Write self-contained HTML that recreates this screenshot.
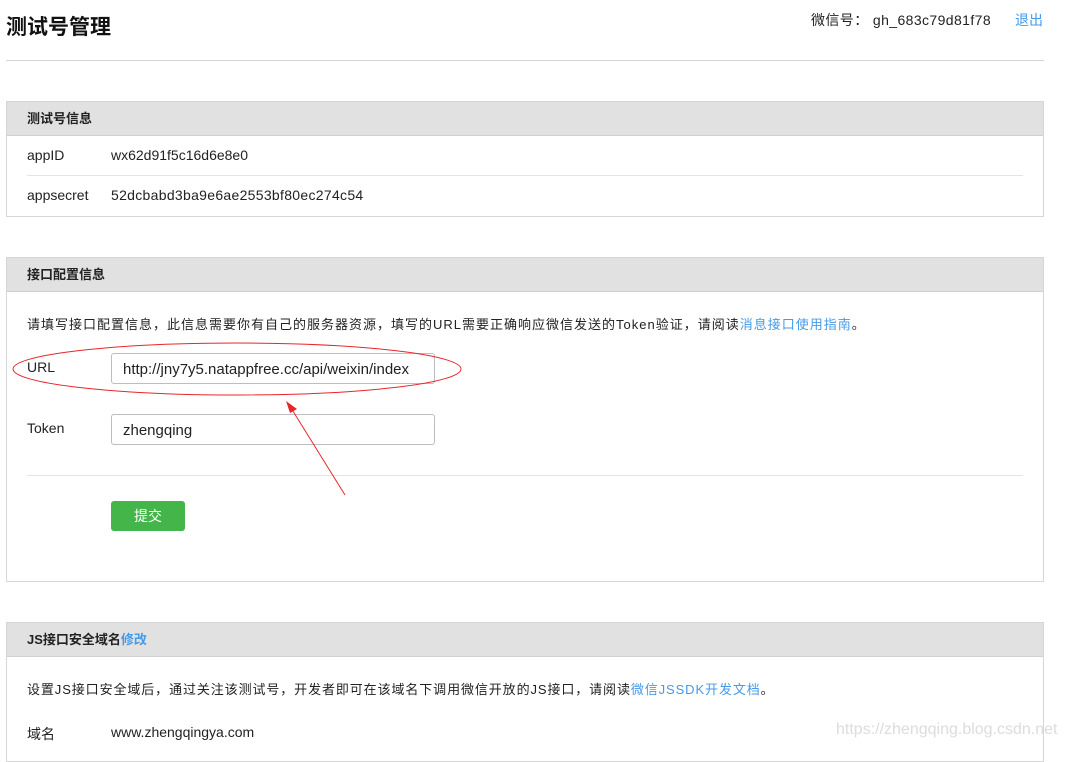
<!DOCTYPE html>
<html><head><meta charset="utf-8"><style>
*{margin:0;padding:0;box-sizing:border-box}
body{width:1067px;height:749px;overflow:hidden;background:#fff;position:relative;font-family:"Liberation Sans","Noto Sans CJK SC",sans-serif;color:#222;font-size:14px}
.a{position:absolute;white-space:nowrap}
.panel{position:absolute;left:6px;width:1038px;border:1px solid #d6d6d6;background:#fff}
.ph{height:34px;background:#e1e1e1;border-bottom:1px solid #d0d0d0;font-size:13px;font-weight:bold;line-height:33px;padding-left:20px;color:#222}
.link{color:#459ae9}
.inp{position:absolute;left:111px;width:324px;height:31px;border:1px solid #bdbdbd;border-radius:3px;line-height:31px;padding-left:11px;font-size:15px}
.sep{position:absolute;left:27px;width:996px;height:1px;background:#e4e4e4}
</style></head><body>
<div class="a" style="left:6px;top:11px;font-size:21px;font-weight:bold;color:#111">测试号管理</div>
<div class="a" style="left:811px;top:10px;font-size:14px;letter-spacing:0.4px">微信号： gh_683c79d81f78</div>
<div class="a link" style="left:1015px;top:10px;font-size:14px">退出</div>
<div class="a" style="left:6px;top:60px;width:1038px;height:1px;background:#d4d4d4"></div>

<div class="panel" style="top:101px;height:116px"><div class="ph">测试号信息</div></div>
<div class="a" style="left:27px;top:147px">appID</div>
<div class="a" style="left:111px;top:147px">wx62d91f5c16d6e8e0</div>
<div class="sep" style="top:175px"></div>
<div class="a" style="left:27px;top:187px">appsecret</div>
<div class="a" style="left:111px;top:187px;letter-spacing:0.3px">52dcbabd3ba9e6ae2553bf80ec274c54</div>

<div class="panel" style="top:257px;height:325px"><div class="ph">接口配置信息</div></div>
<div class="a" style="left:27px;top:314px;font-size:13px;letter-spacing:1px">请填写接口配置信息，此信息需要你有自己的服务器资源，填写的URL需要正确响应微信发送的Token验证，请阅读<span class="link">消息接口使用指南</span>。</div>
<div class="a" style="left:27px;top:359px">URL</div>
<div class="inp" style="top:353px">http://jny7y5.natappfree.cc/api/weixin/index</div>
<div class="a" style="left:27px;top:420px">Token</div>
<div class="inp" style="top:414px">zhengqing</div>
<div class="sep" style="top:475px"></div>
<div class="a" style="left:111px;top:501px;width:74px;height:30px;background:#44b549;border-radius:3px;color:#fff;text-align:center;line-height:30px;font-size:14px">提交</div>

<div class="panel" style="top:622px;height:140px"><div class="ph">JS接口安全域名<span class="link">修改</span></div></div>
<div class="a" style="left:27px;top:679px;font-size:13px;letter-spacing:0.9px">设置JS接口安全域后，通过关注该测试号，开发者即可在该域名下调用微信开放的JS接口，请阅读<span class="link">微信JSSDK开发文档</span>。</div>
<div class="a" style="left:27px;top:724px">域名</div>
<div class="a" style="left:111px;top:724px">www.zhengqingya.com</div>
<div class="a" style="left:836px;top:721px;font-size:16px;color:#dcdcdc">https://zhengqing.blog.csdn.net</div>

<svg class="a" style="left:0;top:0" width="1067" height="749">
<ellipse cx="237" cy="369" rx="224" ry="26" fill="none" stroke="#e8262a" stroke-width="1"/>
<line x1="345" y1="495" x2="291" y2="408" stroke="#e8262a" stroke-width="1"/>
<polygon points="286,401 297,409 290,413" fill="#e8262a"/>
</svg>
</body></html>
